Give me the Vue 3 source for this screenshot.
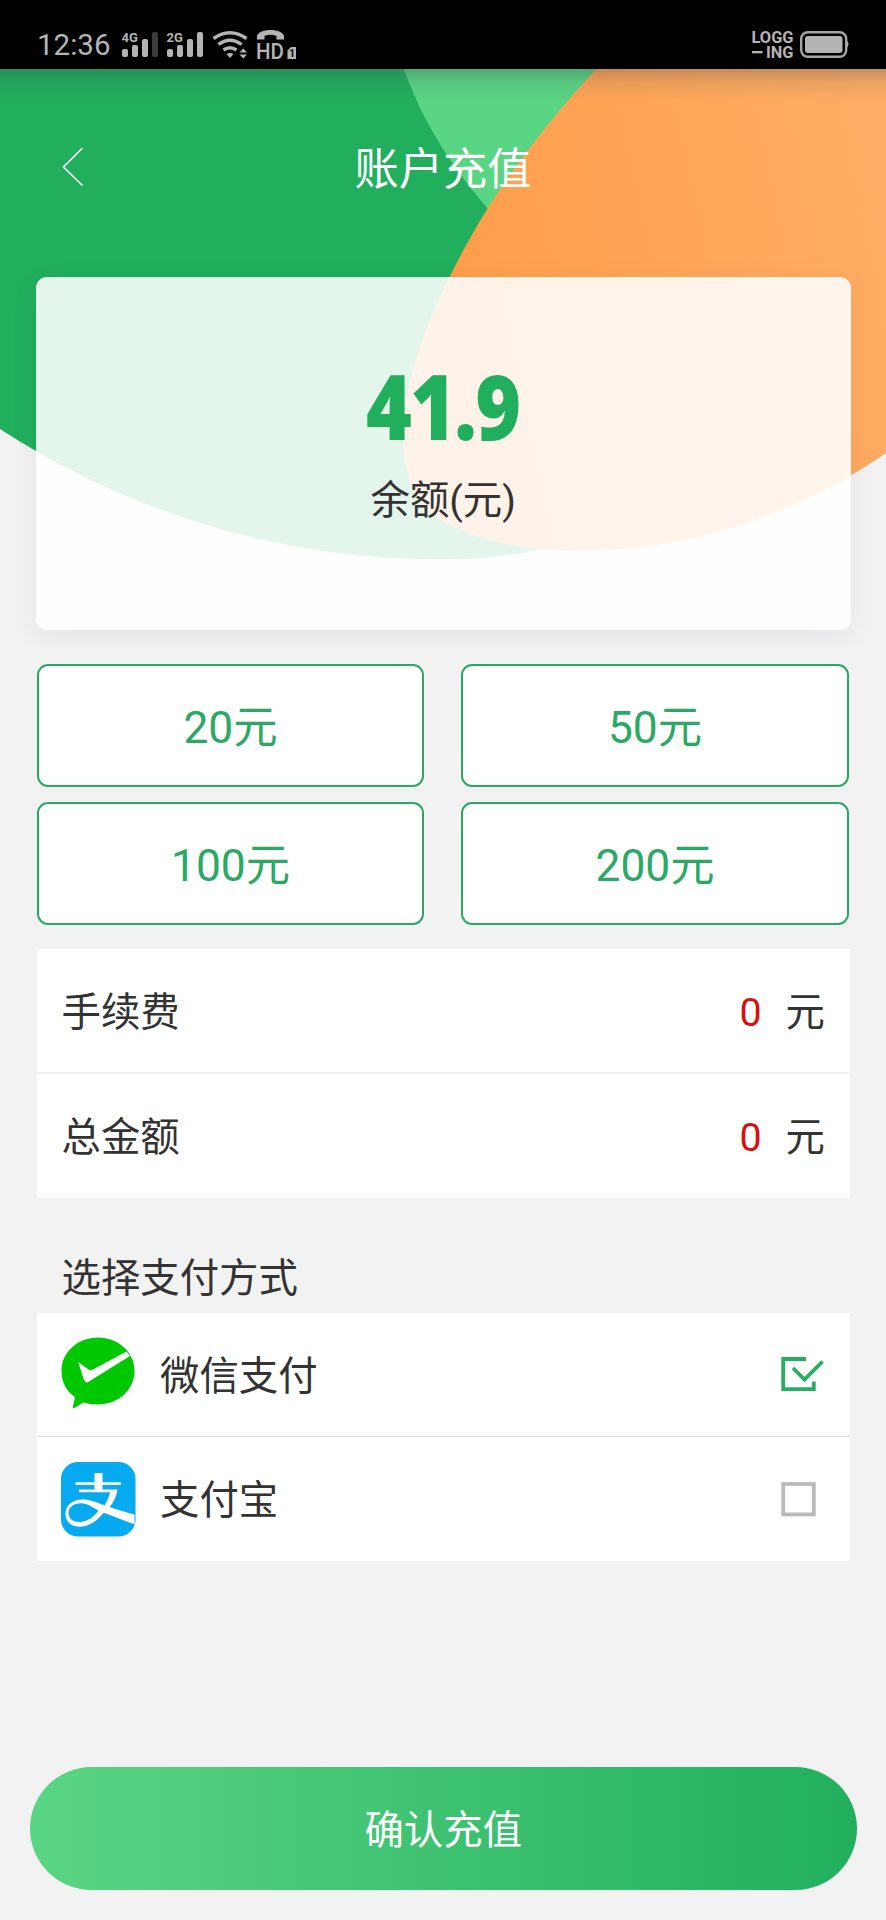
<script setup>
import { ref } from 'vue'

const amounts = ['20元', '50元', '100元', '200元']
const fees = [
  { label: '手续费', value: 0 },
  { label: '总金额', value: 0 },
]
const methods = [
  { id: 'wechat', label: '微信支付' },
  { id: 'alipay', label: '支付宝' },
]
const selected = ref('wechat')
</script>

<template>
  <div class="page">
    <div class="status">
      <span class="clock">12:36</span>
      <svg class="status-left" width="180" height="38" viewBox="120 29 180 38" fill="#b4b4b4">
        <text x="121.5" y="42" font-size="13" font-weight="700">4G</text>
        <rect x="122" y="49" width="6" height="8" rx="2" />
        <rect x="132" y="45" width="6" height="12" rx="2" />
        <rect x="142" y="39" width="6" height="18" rx="2" />
        <rect x="152" y="32" width="6" height="25" rx="2" fill="#3c3c3c" />
        <text x="166.5" y="42" font-size="13" font-weight="700">2G</text>
        <rect x="167" y="49" width="6" height="8" rx="2" />
        <rect x="177" y="45" width="6" height="12" rx="2" />
        <rect x="187" y="39" width="6" height="18" rx="2" />
        <rect x="197" y="32" width="6" height="25" rx="2" />
        <g fill="none" stroke="#b4b4b4" stroke-width="3.4">
          <path d="M213.5 38.5Q230 27 246.500 38.500" />
          <path d="M218.500 44.500Q230 36 241.500 44.500" />
          <path d="M223.500 50Q230 45.500 236.500 50" />
        </g>
        <path d="M226.500 54Q230 52 233.500 54L230 58ZM239.500 52.500 243.300 48.500 247 52.500ZM239.500 54.500 243.300 58.500 247 54.500Z" />
        <path d="M257 39.500V36C259 28 282 28 284 36V39.500H276.500V36Q270.500 33.500 264.500 36V39.500Z" />
        <text x="256" y="58.500" font-size="21.500" font-weight="500" textLength="28" lengthAdjust="spacingAndGlyphs">HD</text>
        <path d="M291 47H296V59H287.500V50.500Z" />
        <text x="289.300" y="57" font-size="10" font-weight="700" fill="#000">1</text>
      </svg>
      <svg class="status-right" width="102" height="38" viewBox="749 29 102 38" fill="#b4b4b4">
        <g font-size="16.5" font-weight="700">
          <text x="751.500" y="43" textLength="42" lengthAdjust="spacingAndGlyphs">LOGG</text>
          <text x="766" y="58" textLength="27.500" lengthAdjust="spacingAndGlyphs">ING</text>
        </g>
        <rect x="752" y="51" width="10.500" height="2.300" />
        <rect x="801.200" y="32.200" width="45" height="24.600" rx="6.500" fill="none" stroke="#a4a4a4" stroke-width="2.400" />
        <rect x="805" y="36" width="37.500" height="17" rx="3" />
        <path d="M847 41Q850 44 847 47.500Z" />
      </svg>
    </div>

    <div class="hero">
      <svg class="hero-bg" width="886" height="579" viewBox="0 69 886 579">
        <defs>
          <linearGradient id="warm" gradientUnits="userSpaceOnUse" x1="420" y1="340" x2="886" y2="240">
            <stop offset="0" stop-color="#ff9c48" />
            <stop offset="1" stop-color="#ffad64" />
          </linearGradient>
          <linearGradient id="shade" x1="0" y1="0" x2="0" y2="1">
            <stop offset="0" stop-color="#3c4650" stop-opacity=".3" />
            <stop offset=".4" stop-color="#3c4650" stop-opacity=".11" />
            <stop offset="1" stop-color="#3c4650" stop-opacity="0" />
          </linearGradient>
        </defs>
        <path fill="#21af5e" d="M0 69H640V500L535 550C505 556.500 475 559.500 440 559.500A807 807 0 0 1 0 429Z" />
        <path fill="#5ad584" d="M404 69H620V209H488C455 171 423 124 404 69Z" />
        <path fill="url(#warm)" d="M596 69H886V453C792 518 685 551 576 551C520 551 472 538 443 521C421 508 403 480 403 440C403 385 426 317 469 240C500 184 547 122 596 69Z" />
        <rect x="0" y="69" width="886" height="32" fill="url(#shade)" />
      </svg>
      <div class="nav">
        <svg class="back" width="24" height="42" viewBox="0 0 24 42" fill="none" stroke="#fff" stroke-width="1.6">
          <path d="M21.500 2 2.500 21 21.500 39.500" />
        </svg>
        <h1 class="title">账户充值</h1>
        <span class="nav-end"></span>
      </div>
      <div class="card">
        <div class="balance">41.9</div>
        <div class="caption">余额(元)</div>
      </div>
    </div>

    <div class="amounts">
      <button v-for="a in amounts" :key="a" class="amount">{{ a }}</button>
    </div>

    <div class="panel">
      <div v-for="f in fees" :key="f.label" class="row">
        <span class="label">{{ f.label }}</span>
        <span class="value">{{ f.value }}</span>
        <span class="unit">元</span>
      </div>
    </div>

    <div class="section">选择支付方式</div>
    <div class="panel pay">
      <div v-for="m in methods" :key="m.id" class="row" @click="selected = m.id">
        <svg v-if="m.id === 'wechat'" class="logo" width="75" height="75" viewBox="0 0 75 75">
          <path fill="#00c800" d="M37 .5C57 .5 73.500 15 73.500 34S57 67.500 37 67.500Q29 67.500 22.500 65.500L12.500 71.500Q11.500 71.500 12 69L14 60C5 54 .5 44.500 .5 34C.5 15 17 .5 37 .5Z" />
          <path fill="#fff" d="M17.500 26Q16 24.500 18.500 26L27.500 32.500Q29.500 33.500 32 32.500L65.500 14.500 69 19 28 44.500Q24.500 47 23 43Z" />
        </svg>
        <svg v-else class="logo" width="75" height="75" viewBox="0 0 75 75">
          <rect width="74.500" height="74.500" rx="17" fill="#05aaf0" />
          <path fill="#fff" d="M33.500 11H41.500V20.300H60V23H41.500V27.500H56.500C55 38 49 46 42 51.500C35 60 27 64.700 18.500 64.700C10 64.700 4.500 59.500 4.500 51.500C4.500 43 12 37.500 21.500 37.500C29 37.500 35 40 43.500 43.500C46 40 48 35 49 30.300H18V27.500H33.500V23H14.500V20.300H33.500Z" />
          <path fill="#fff" d="M42 42.500Q53 47 73.500 52.500V62.500L41 50Z" />
          <path fill="#05aaf0" d="M37.500 48.500C31 45 26 41.300 20 41.300C12.500 41.300 7.500 45.500 7.500 51C7.500 57 12.500 60 18.500 60C26 60 33 55 37.500 48.500Z" />
        </svg>
        <span class="label">{{ m.label }}</span>
        <svg class="check" width="46" height="40" viewBox="0 0 46 40" fill="none" stroke-width="3.8">
          <g v-if="selected === m.id" stroke="#26ae64">
            <path d="M26 4H3.200V34.200H33.800V26.500" />
            <path d="M13 13 24.500 24.500 42.500 6.500" />
          </g>
          <rect v-else x="3.200" y="5" width="30.600" height="30.400" stroke="#bababa" />
        </svg>
      </div>
    </div>

    <button class="confirm">确认充值</button>
  </div>
</template>

<style>
body {
  margin: 0;
  background: #f2f2f2;
}
</style>

<style scoped>
.page {
  width: 886px;
  height: 1920px;
  overflow: hidden;
  display: flex;
  flex-direction: column;
  background: #f2f2f2;
  color: #333;
  font-family: Roboto, "Noto Sans CJK SC", sans-serif;
  font-size: 39.4px;
  line-height: 54px;
}
.status {
  height: 69px;
  flex: none;
  box-sizing: border-box;
  display: flex;
  align-items: flex-start;
  padding: 29px 35px 0 37px;
  background: #000;
  font-family: Roboto, sans-serif;
}
.clock {
  width: 83px;
  color: #b4b4b4;
  font-size: 29.5px;
  line-height: 33px;
}
.status-left,
.status-right {
  overflow: visible;
}
.status-right {
  margin-left: auto;
}
.hero {
  position: relative;
  height: 579px;
  flex: none;
  overflow: hidden;
}
.hero-bg {
  position: absolute;
  inset: 0;
}
.nav {
  position: relative;
  display: flex;
  align-items: center;
  justify-content: space-between;
  height: 196px;
  padding: 0 61px;
}
.back,
.nav-end {
  width: 24px;
}
.title {
  margin: 0;
  padding-top: 5px;
  color: #fff;
  font-size: 44.3px;
  font-weight: 400;
  line-height: 52px;
}
.card {
  position: relative;
  box-sizing: border-box;
  width: 815.5px;
  height: 353px;
  margin: 11.5px 0 0 35.5px;
  padding-top: 83px;
  border-radius: 11px;
  background: rgba(255, 255, 255, 0.88);
  box-shadow: 0 7px 30px rgba(20, 20, 60, 0.06);
  text-align: center;
}
.balance {
  height: 91px;
  margin-right: 2px;
  color: #21af5e;
  font-family: "Open Sans", "Noto Sans", sans-serif;
  font-size: 91px;
  font-weight: 800;
  line-height: 91px;
  letter-spacing: -2px;
  transform: scaleX(0.86);
}
.caption {
  margin-top: 25px;
  line-height: 50px;
}
.amounts {
  display: grid;
  grid-template-columns: 387px 388px;
  grid-auto-rows: 123px;
  gap: 15px 37px;
  padding: 16px 37px 0;
}
.amount {
  box-sizing: border-box;
  padding: 4px 0 0;
  border: 2px solid #2ba866;
  border-radius: 11px;
  background: #fff;
  color: #2ba866;
  font: inherit;
  font-size: 44.3px;
  line-height: 52px;
}
.panel {
  margin: 24px 36.5px 0 37px;
  background: #fff;
}
.row {
  box-sizing: border-box;
  display: flex;
  align-items: center;
  height: 123px;
  padding: 0 24.5px;
}
.row + .row {
  height: 126px;
  border-top: 2.5px solid #f0f0f0;
}
.label {
  margin-right: auto;
  padding-top: 4px;
}
.value {
  margin-right: 24px;
  padding-top: 4px;
  color: #d9100f;
}
.unit {
  padding-top: 4px;
}
.section {
  margin-top: 54px;
  padding: 0 61.5px;
  height: 61px;
  line-height: 54px;
}
.pay {
  margin-top: 0;
}
.pay .row {
  padding: 0 24px;
}
.pay .row + .row {
  height: 125px;
  border-top: 1px solid #dcdcdc;
}
.logo {
  margin-right: 24px;
}
.confirm {
  width: 827.5px;
  height: 123px;
  margin: 206px 0 0 29.5px;
  padding: 4px 0 0;
  border: 0;
  border-radius: 62px;
  background: linear-gradient(90deg, #5ad584, #21af5e);
  color: #fff;
  font: inherit;
}
</style>
